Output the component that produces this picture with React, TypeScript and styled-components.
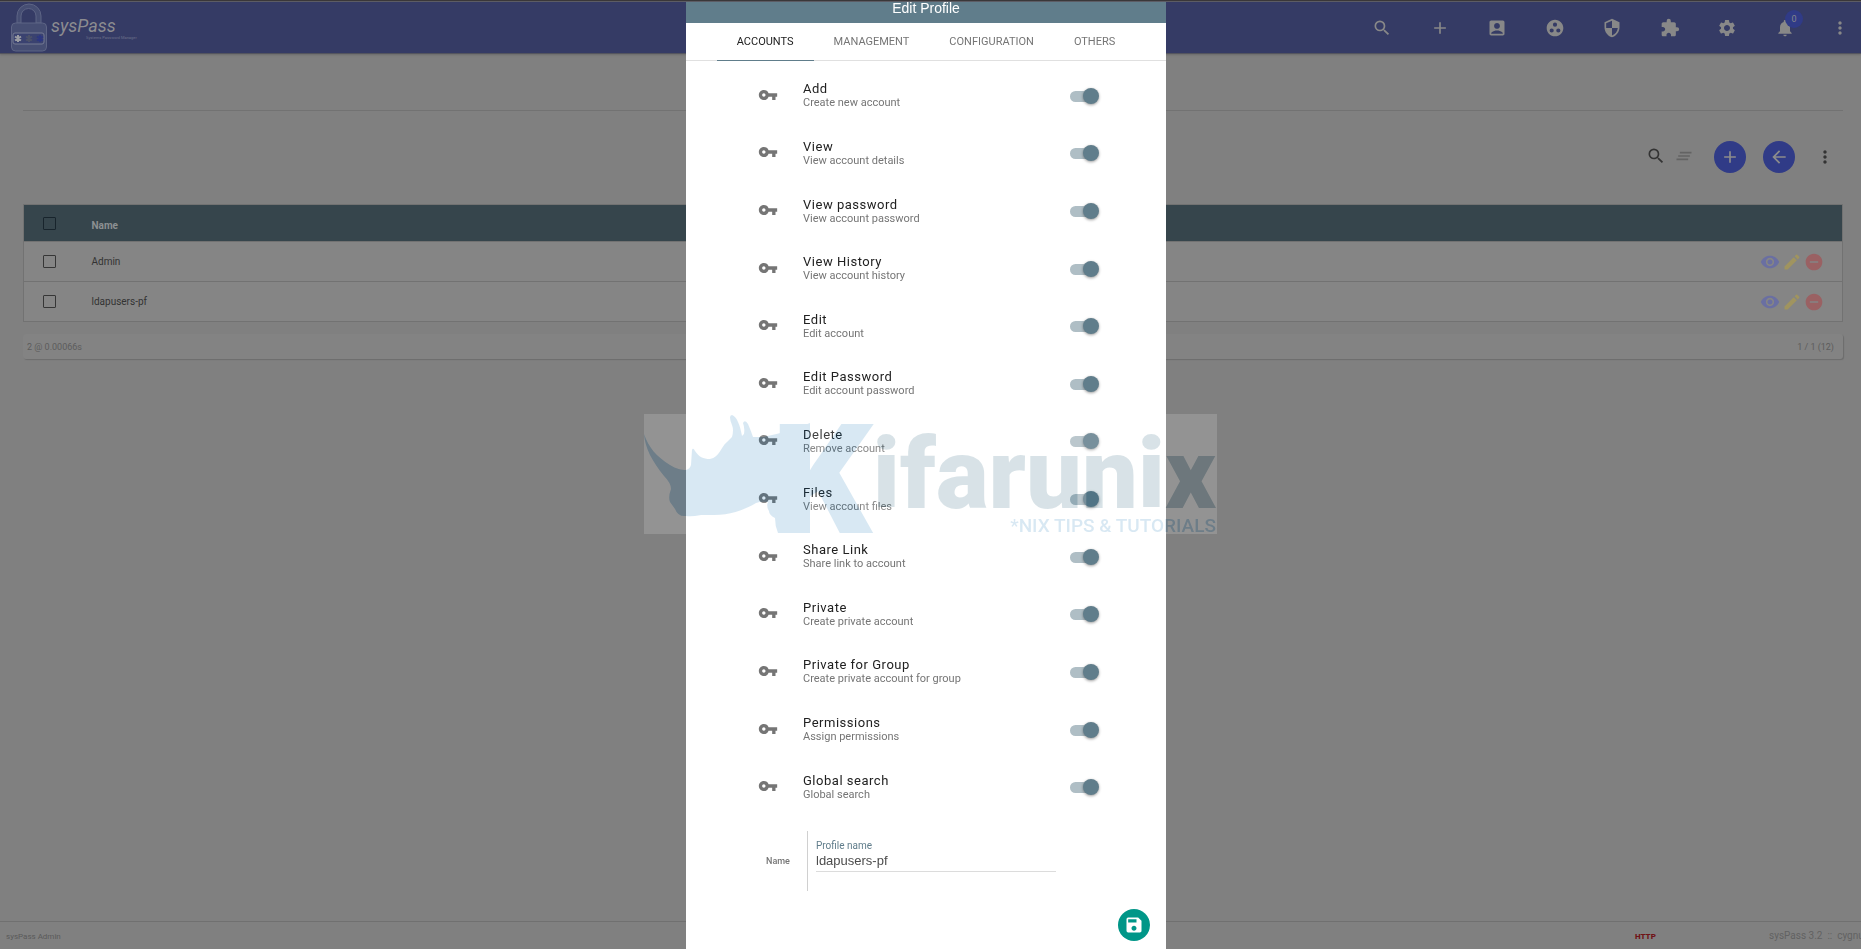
import React from 'react';
import styled, { createGlobalStyle } from 'styled-components';
import {
  MdAccountBox,
  MdAdd,
  MdArrowBack,
  MdClearAll,
  MdEdit,
  MdExtension,
  MdGroupWork,
  MdMoreVert,
  MdNotifications,
  MdRemoveCircle,
  MdSave,
  MdSearch,
  MdSecurity,
  MdSettings,
  MdVisibility,
  MdVpnKey,
} from 'react-icons/md';

const GlobalStyle = createGlobalStyle`
  *, *::before, *::after { box-sizing: border-box; }
  body {
    margin: 0;
    background: #808080;
    font-family: Roboto, "Liberation Sans", sans-serif;
    overflow: hidden;
  }
  button, input { font: inherit; margin: 0; }
`;

/* ---------- page behind the dialog ---------- */

const Page = styled.div`
  display: flex;
  flex-direction: column;
  min-height: 100vh;
  border-top: 1px solid #373436;
`;

const Header = styled.header`
  display: flex;
  align-items: center;
  justify-content: space-between;
  height: 53px;
  padding: 0 9px 0 10px;
  background: #353b65;
  border-top: 1px solid #5c5c64;
  border-bottom: 1px solid #54555f;
  box-shadow: 0 1px 2px #6a6a6a;
`;

const Brand = styled.a`
  display: flex;
  align-items: center;
  gap: 3px;
  color: #8c8c90;
  text-decoration: none;
`;

const BrandText = styled.span`
  display: flex;
  flex-direction: column;
`;

const BrandName = styled.span`
  font-size: 18px;
  line-height: 20px;
  font-style: italic;
`;

const BrandTag = styled.span`
  padding-left: 35px;
  font-size: 4px;
  line-height: 4px;
  color: #6c708a;
`;

const HeaderTools = styled.nav`
  display: flex;
  align-items: center;
  gap: 31px;
`;

const HeaderIcons = styled.div`
  display: flex;
  justify-content: space-between;
  width: 427px;
`;

const IconButton = styled.button<{ $color?: string; $width?: number }>`
  position: relative;
  display: flex;
  align-items: center;
  justify-content: center;
  width: ${(p) => p.$width ?? 24}px;
  height: 24px;
  padding: 0;
  border: 0;
  background: none;
  color: ${(p) => p.$color ?? '#888888'};
  font-size: 20px;
`;

const Badge = styled.span`
  position: absolute;
  top: -6px;
  left: 12px;
  width: 18px;
  height: 18px;
  border-radius: 50%;
  background: #303b87;
  color: #85868c;
  font-size: 9px;
  line-height: 18px;
  text-align: center;
`;

const Content = styled.main`
  display: flex;
  flex: 1;
  flex-direction: column;
  padding: 0 18px 0 23px;
`;

const Divider = styled.hr`
  width: 100%;
  margin: 56px 0 0;
  border: 0;
  border-top: 1px solid #727272;
`;

const Toolbar = styled.div`
  display: flex;
  align-items: center;
  justify-content: flex-end;
  margin: 30px 6px 31px 0;
`;

const ToolGroup = styled.div`
  display: flex;
  align-items: center;
  gap: 4px;
  margin: 0 18px 2px 0;
`;

const RoundButton = styled.button<{ $color: string }>`
  display: flex;
  align-items: center;
  justify-content: center;
  width: 32px;
  height: 32px;
  padding: 0;
  border: 0;
  border-radius: 50%;
  background: ${(p) => p.$color};
  color: inherit;
  font-size: 20px;
`;

const ToolActions = styled.div`
  display: flex;
  gap: 17px;
  margin-right: 18px;
  color: #8c8c8c;
`;

const Table = styled.table`
  width: 100%;
  border: 1px solid #727272;
  border-collapse: collapse;
  font-size: 10px;
  line-height: 16px;
  color: #333333;
  background: #858585;
`;

const HeadRow = styled.tr`
  height: 37px;
  background: #36454c;
  color: #8c9092;
  text-align: left;
`;

const Row = styled.tr`
  height: 40px;
  border-top: 1px solid #727272;
`;

const CheckCell = styled.td`
  width: 68px;
  padding: 0 0 0 19px;
`;

const NameCell = styled.td`
  padding: 0;
`;

const NameHead = styled.th`
  padding: 5px 0 0;
  font-weight: 700;
`;

const ActionCell = styled.td`
  width: 120px;
  padding: 0 18px 0 0;
`;

const Actions = styled.div`
  display: flex;
  justify-content: flex-end;
  gap: 2px;
`;

const CheckBox = styled.input<{ $dark?: boolean }>`
  display: block;
  appearance: none;
  width: 13px;
  height: 13px;
  border: 1px solid ${(p) => (p.$dark ? '#18242c' : '#363636')};
  border-radius: 1px;
`;

const Pager = styled.div`
  display: flex;
  align-items: center;
  justify-content: space-between;
  height: 25px;
  margin-top: 12px;
  padding: 0 9px 0 4px;
  border-radius: 3px;
  background: #838383;
  box-shadow: 1px 1px 1px #6c6c6c;
  color: #5c5c5c;
  font-size: 9px;
`;

const Footer = styled.footer`
  display: flex;
  align-items: center;
  height: 28px;
  border-top: 1px solid #707070;
  color: #5a5a5a;
  font-size: 8px;
  overflow: hidden;
  white-space: nowrap;
`;

const FooterUser = styled.span`
  flex: 1;
  padding: 2px 0 0 6px;
`;

const FooterHttp = styled.span`
  width: 134px;
  padding-top: 2px;
  color: #701418;
  font-weight: 900;
`;

const FooterVersion = styled.span`
  width: 92px;
  color: #626262;
  font-size: 10px;
`;

/* ---------- dialog ---------- */

const Overlay = styled.div`
  position: fixed;
  inset: 2px 9px 0 0;
  display: flex;
  justify-content: center;
`;

const Dialog = styled.section`
  display: flex;
  flex-direction: column;
  width: 480px;
  background: #ffffff;
`;

const DialogTitle = styled.h1`
  height: 21px;
  margin: 0;
  background: #607d8b;
  color: #ffffff;
  font: 400 14px/12px "Liberation Sans", sans-serif;
  text-align: center;
`;

const Tabs = styled.div`
  display: flex;
  justify-content: center;
  height: 38px;
  border-bottom: 1px solid #e0e0e0;
`;

const Tab = styled.button<{ $active?: boolean }>`
  height: 38px;
  padding: 0 20px;
  border: 0;
  border-bottom: 1px solid ${(p) => (p.$active ? '#607d8b' : 'transparent')};
  background: none;
  color: ${(p) => (p.$active ? '#212121' : '#757575')};
  font-size: 11px;
  text-transform: uppercase;
`;

const Permissions = styled.ul`
  display: grid;
  grid-template-rows: repeat(13, 1fr);
  height: 749px;
  margin: 6px 67px 0 72px;
  padding: 0;
  list-style: none;
`;

const PermissionRow = styled.label`
  display: flex;
  align-items: center;
  height: 100%;
  color: #757575;
  font-size: 20px;
  svg { margin-bottom: 2px; }
`;

const PermissionText = styled.span`
  display: flex;
  flex: 1;
  flex-direction: column;
  padding: 1px 0 0 25px;
`;

const PermissionTitle = styled.span`
  color: #212121;
  font-size: 13px;
  line-height: 14px;
  letter-spacing: 0.04em;
`;

const PermissionNote = styled.span`
  color: #757575;
  font-size: 11px;
  line-height: 14px;
`;

const Switch = styled.input`
  position: relative;
  appearance: none;
  width: 29px;
  height: 16px;
  &::before {
    content: '';
    position: absolute;
    inset: 3px 2px 2px 0;
    border-radius: 6px;
    background: #afbec5;
  }
  &::after {
    content: '';
    position: absolute;
    top: 0;
    right: 0;
    width: 16px;
    height: 16px;
    border-radius: 50%;
    background: #607d8b;
    box-shadow: 0 1px 3px rgba(0, 0, 0, 0.4);
  }
`;

const NameField = styled.div`
  display: flex;
  margin: 15px 0 0 80px;
`;

const NameTitle = styled.span`
  display: flex;
  align-items: center;
  width: 42px;
  border-right: 1px solid #d0d0d0;
  color: #757575;
  font-size: 9px;
  font-weight: 500;
`;

const Field = styled.div`
  display: flex;
  flex-direction: column;
  width: 248px;
  height: 60px;
  padding: 8px 0 0 8px;
`;

const FieldLabel = styled.label`
  color: #607d8b;
  font-size: 10px;
  line-height: 13px;
`;

const TextInput = styled.input`
  height: 20px;
  padding: 0 0 2px;
  border: 0;
  border-bottom: 1px solid #dcdcdc;
  outline: 0;
  background: none;
  color: #4c4c4c;
  font: 13px/16px "Liberation Sans", sans-serif;
`;

const DialogActions = styled.div`
  display: flex;
  justify-content: flex-end;
  margin-top: 18px;
  padding-right: 16px;
  color: #ffffff;
`;

/* ---------- watermark ---------- */

const Watermark = styled.div`
  position: fixed;
  inset: 0;
  display: flex;
  align-items: center;
  justify-content: center;
  padding-bottom: 1px;
  pointer-events: none;
  svg { opacity: 0.15; overflow: visible; }
`;

const LockLogo = () => (
  <svg width="38" height="50" viewBox="0 0 38 50" fill="none" stroke="#5d6485">
    <path d="M7 20V13a12 12 0 0 1 24 0V20H26V13a7.500 7.500 0 0 0-15 0V20Z" fill="#464e73" />
    <rect x="1.500" y="20" width="35" height="28" rx="4" fill="#464e73" />
    <rect x="3" y="30" width="31" height="11" rx="2" fill="#3a4270" stroke="#757a92" />
    <g strokeWidth="2">
      <path d="M8 32v7M5 33.500l6 4M11 33.500l-6 4" stroke="#9a9ca3" />
      <path d="M19 32v7M16 33.500l6 4M22 33.500l-6 4" stroke="#4b5169" />
      <path d="M30 32v7M27 33.500l6 4M33 33.500l-6 4" stroke="#2d3781" />
    </g>
  </svg>
);

const WatermarkLogo = () => (
  <svg width="573" height="120" viewBox="0 0 573 120">
    <rect width="573" height="120" fill="#ffffff" />
    <g fill="#006bb2">
      <path d="M0 20C5 34 12 42 26 51C32 55 38 56 42 56Q46 55 47 51L48 36Q49 33 51 37C55 43 59 45 66 45C76 43 76 34 83 28L88 23Q90 16 88 11Q84 1 88 1C93 3 96 11 98 22L100 20Q101 14 99 9Q101 5 104 10Q107 17 109 23L119 23Q145 18 166 9V119H134Q131 112 131 104Q125 101 125 97Q122 92 124 88Q117 87 112 89C91 101 80 101 57 101Q47 103 42 102Q34 103 31 95L26 88Q24 83 27 75Q27 69 20 62C8 47 1 34 0 20Z" />
      <text x="124" y="119" fontFamily="Open Sans" fontWeight="800" fontSize="153">K</text>
      <text x="572" y="118" textAnchor="end" fontFamily="Roboto" fontWeight="500" fontSize="19">*NIX TIPS &amp; TUTORIALS</text>
    </g>
    <text x="572" y="94" textAnchor="end" fill="#004664" fontFamily="Roboto" fontWeight="900" fontSize="99">ifarunix</text>
  </svg>
);

const headerItems = [
  { label: 'Search', icon: <MdSearch /> },
  { label: 'New', icon: <MdAdd /> },
  { label: 'Users', icon: <MdAccountBox /> },
  { label: 'Items', icon: <MdGroupWork /> },
  { label: 'Security', icon: <MdSecurity /> },
  { label: 'Plugins', icon: <MdExtension /> },
  { label: 'Settings', icon: <MdSettings /> },
];

const profiles = ['Admin', 'ldapusers-pf'];

const tabs = ['Accounts', 'Management', 'Configuration', 'Others'];

const permissions = [
  ['Add', 'Create new account'],
  ['View', 'View account details'],
  ['View password', 'View account password'],
  ['View History', 'View account history'],
  ['Edit', 'Edit account'],
  ['Edit Password', 'Edit account password'],
  ['Delete', 'Remove account'],
  ['Files', 'View account files'],
  ['Share Link', 'Share link to account'],
  ['Private', 'Create private account'],
  ['Private for Group', 'Create private account for group'],
  ['Permissions', 'Assign permissions'],
  ['Global search', 'Global search'],
];

export default function App() {
  return (
    <>
      <GlobalStyle />
      <Page>
        <Header>
          <Brand href="#">
            <LockLogo />
            <BrandText>
              <BrandName>sysPass</BrandName>
              <BrandTag>Systems Password Manager</BrandTag>
            </BrandText>
          </Brand>
          <HeaderTools>
            <HeaderIcons>
              {headerItems.map((item) => (
                <IconButton key={item.label} aria-label={item.label}>
                  {item.icon}
                </IconButton>
              ))}
              <IconButton aria-label="Notifications">
                <MdNotifications />
                <Badge>0</Badge>
              </IconButton>
            </HeaderIcons>
            <IconButton aria-label="More">
              <MdMoreVert />
            </IconButton>
          </HeaderTools>
        </Header>
        <Content>
          <Divider />
          <Toolbar>
            <ToolGroup>
              <IconButton aria-label="Search profiles" $color="#333333">
                <MdSearch />
              </IconButton>
              <IconButton aria-label="Clear" $color="#636363">
                <MdClearAll />
              </IconButton>
            </ToolGroup>
            <ToolActions>
              <RoundButton aria-label="New profile" $color="#303b87">
                <MdAdd />
              </RoundButton>
              <RoundButton aria-label="Back" $color="#303b87">
                <MdArrowBack />
              </RoundButton>
            </ToolActions>
            <IconButton aria-label="More actions" $color="#333333">
              <MdMoreVert />
            </IconButton>
          </Toolbar>
          <Table>
            <thead>
              <HeadRow>
                <CheckCell>
                  <CheckBox type="checkbox" aria-label="Select all" $dark />
                </CheckCell>
                <NameHead>Name</NameHead>
                <ActionCell />
              </HeadRow>
            </thead>
            <tbody>
              {profiles.map((name) => (
                <Row key={name}>
                  <CheckCell>
                    <CheckBox type="checkbox" aria-label={`Select ${name}`} />
                  </CheckCell>
                  <NameCell>{name}</NameCell>
                  <ActionCell>
                    <Actions>
                      <IconButton aria-label={`View ${name}`} $color="#6a6fa2" $width={20}>
                        <MdVisibility />
                      </IconButton>
                      <IconButton aria-label={`Edit ${name}`} $color="#a0945f" $width={20}>
                        <MdEdit />
                      </IconButton>
                      <IconButton aria-label={`Delete ${name}`} $color="#9a6163" $width={20}>
                        <MdRemoveCircle />
                      </IconButton>
                    </Actions>
                  </ActionCell>
                </Row>
              ))}
            </tbody>
          </Table>
          <Pager>
            <span>2 @ 0.00066s</span>
            <span>1 / 1 (12)</span>
          </Pager>
        </Content>
        <Footer>
          <FooterUser>sysPass Admin</FooterUser>
          <FooterHttp>HTTP</FooterHttp>
          <FooterVersion>sysPass 3.2 &nbsp;::&nbsp; cygnux</FooterVersion>
        </Footer>
      </Page>

      <Overlay>
        <Dialog role="dialog" aria-labelledby="dialog-title">
          <DialogTitle id="dialog-title">Edit Profile</DialogTitle>
          <Tabs role="tablist">
            {tabs.map((tab, i) => (
              <Tab key={tab} role="tab" aria-selected={i === 0} $active={i === 0}>
                {tab}
              </Tab>
            ))}
          </Tabs>
          <Permissions>
            {permissions.map(([title, note]) => (
              <li key={title}>
                <PermissionRow>
                  <MdVpnKey />
                  <PermissionText>
                    <PermissionTitle>{title}</PermissionTitle>
                    <PermissionNote>{note}</PermissionNote>
                  </PermissionText>
                  <Switch type="checkbox" role="switch" defaultChecked />
                </PermissionRow>
              </li>
            ))}
          </Permissions>
          <NameField>
            <NameTitle>Name</NameTitle>
            <Field>
              <FieldLabel htmlFor="profile-name">Profile name</FieldLabel>
              <TextInput id="profile-name" type="text" defaultValue="ldapusers-pf" />
            </Field>
          </NameField>
          <DialogActions>
            <RoundButton aria-label="Save" $color="#009688">
              <MdSave />
            </RoundButton>
          </DialogActions>
        </Dialog>
      </Overlay>

      <Watermark>
        <WatermarkLogo />
      </Watermark>
    </>
  );
}
